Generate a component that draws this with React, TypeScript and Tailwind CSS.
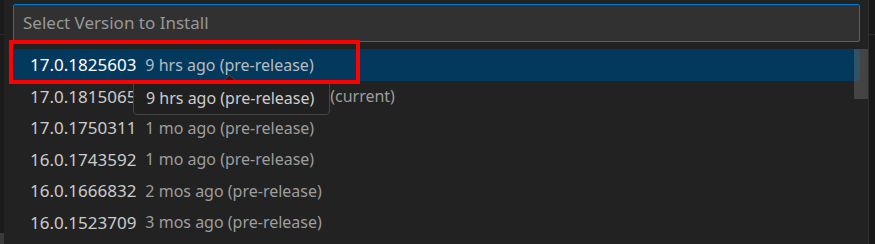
import React from 'react';

type Version = {
  id: string;
  desc: string;
  extra?: string;
};

const versions: Version[] = [
  { id: '17.0.1825603', desc: '9 hrs ago (pre-release)' },
  { id: '17.0.1815065', desc: '6 days ago (pre-release)', extra: '(current)' },
  { id: '17.0.1750311', desc: '1 mo ago (pre-release)' },
  { id: '16.0.1743592', desc: '1 mo ago (pre-release)' },
  { id: '16.0.1666832', desc: '2 mos ago (pre-release)' },
  { id: '16.0.1523709', desc: '3 mos ago (pre-release)' },
];

const Row = ({ v, selected }: { v: Version; selected: boolean }) => (
  <div
    className={`flex h-[31.5px] shrink-0 items-center rounded-[4px] pl-[17px] ${
      selected ? 'bg-[#04395e] text-white' : 'text-[#cccccc]'
    }`}
  >
    <span>{v.id}</span>
    <span className={`ml-[9px] text-[16px] ${selected ? 'text-[#b4bcc4]' : 'text-[#9d9d9d]'}`}>{v.desc}</span>
    {v.extra && <span className="ml-[6px] text-[16px] text-[#9d9d9d]">{v.extra}</span>}
  </div>
);

export default function App() {
  return (
    <div
      className="relative flex h-[244px] w-[875px] overflow-hidden bg-[#222222] text-[17px]"
      style={{ fontFamily: '"Noto Sans", "Open Sans", sans-serif' }}
    >
      {/* editor edge on the left */}
      <div className="flex w-[4px] flex-col bg-[#1b1b1b]">
        <div className="h-[35px] border-b border-[#2b2b2b]" />
        <div className="flex-1" />
        <div className="h-[11px] bg-[#3a3a3a]" />
      </div>

      {/* quick pick */}
      <div className="flex min-w-0 flex-1 flex-col pl-[9px] pr-[8px] pt-[4px]">
        <div className="flex h-[38px] shrink-0 items-center rounded-[2px] border border-[#0078d4] bg-[#313131] pl-[9px] text-[#989898]">
          Select Version to Install
        </div>
        <div className="mt-[7px] flex flex-col">
          {versions.map((v, i) => (
            <Row key={v.id} v={v} selected={i === 0} />
          ))}
        </div>
      </div>

      {/* editor edge on the right */}
      <div className="flex w-[7px] flex-col border-l border-[#2e2e2e] bg-[#181818]">
        <div className="h-[35px] border-b border-[#2b2b2b]" />
      </div>

      {/* list scrollbar */}
      <div className="absolute left-[854px] top-[49px] h-[50px] w-[14px] bg-[#797979]/40" />

      {/* hover tooltip */}
      <div className="absolute left-[133px] top-[80px] flex h-[35px] items-center rounded-[4px] border border-[#454545] bg-[#202020] pl-[12px] pr-[15px] text-[16px] text-[#cccccc]">
        <div className="absolute -top-[5px] left-[91px] h-[9px] w-[9px] rotate-45 border-l border-t border-[#454545] bg-[#202020]" />
        9 hrs ago (pre-release)
      </div>

      {/* annotation */}
      <div className="absolute left-[9px] top-[40px] h-[44px] w-[351px] border-4 border-[#ff0000]" />
    </div>
  );
}
